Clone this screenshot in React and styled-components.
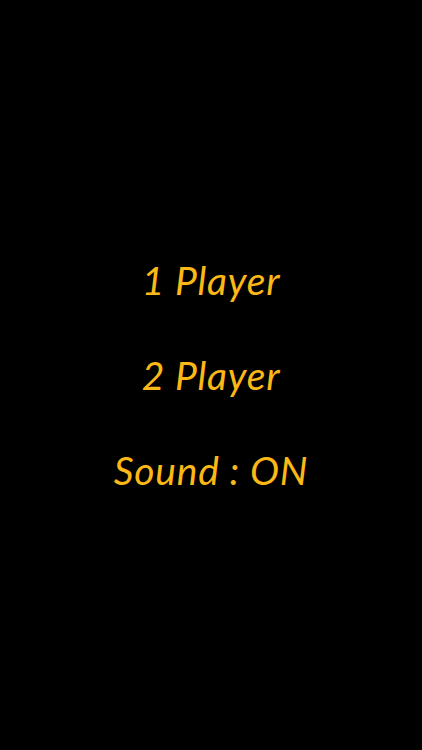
import React from "react";
import styled, { createGlobalStyle } from "styled-components";

const GlobalStyle = createGlobalStyle`
  html, body {
    margin: 0;
    padding: 0;
    background: #000;
  }
`;

const Screen = styled.div`
  width: 100%;
  height: 100vh;
  background: #000;
  display: flex;
  flex-direction: column;
  align-items: center;
  justify-content: center;
  gap: 54px;
`;

const MenuItem = styled.div`
  font-family: "Lato", "Open Sans", sans-serif;
  font-style: italic;
  font-weight: 400;
  font-size: 39px;
  line-height: 41px;
  letter-spacing: 0.8px;
  color: #fbb817;
  cursor: pointer;
  user-select: none;
`;

export default function App() {
  return (
    <>
      <GlobalStyle />
      <Screen>
        <MenuItem>1 Player</MenuItem>
        <MenuItem>2 Player</MenuItem>
        <MenuItem>Sound : ON</MenuItem>
      </Screen>
    </>
  );
}
